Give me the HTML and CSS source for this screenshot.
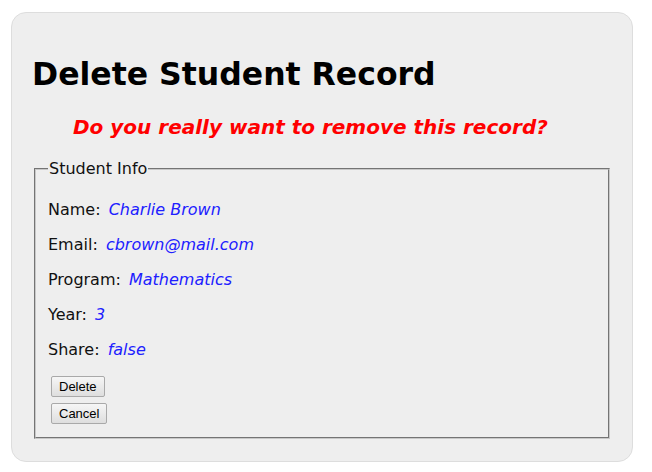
FILE: index.html
```html
<!DOCTYPE html>
<html>
<head>
<meta charset="utf-8">
<link rel="stylesheet" href="styles.css">
</head>
<body>
<div class="panel">
  <h1 class="title">Delete Student Record</h1>
  <p class="warning">Do you really want to remove this record?</p>
  <fieldset class="info">
    <legend class="info-legend">Student Info</legend>
    <p class="row">Name: <span class="value">Charlie Brown</span></p>
    <p class="row">Email: <span class="value">cbrown@mail.com</span></p>
    <p class="row">Program: <span class="value">Mathematics</span></p>
    <p class="row">Year: <span class="value">3</span></p>
    <p class="row">Share: <span class="value">false</span></p>
    <div class="actions">
      <button class="btn" type="button">Delete</button>
      <button class="btn" type="button">Cancel</button>
    </div>
  </fieldset>
</div>
</body>
</html>
```
FILE: styles.css
```css
html, body {
  margin: 0;
  padding: 0;
  background: #fff;
}
body {
  font-family: "DejaVu Sans", Verdana, sans-serif;
  font-size: 16px;
  color: #111;
}
.panel {
  margin: 12px 0 0 11px;
  width: 580px;
  height: 408px;
  padding: 20px;
  background: #eee;
  border: 1px solid #ddd;
  border-radius: 15px;
}
.title {
  font-size: 31.5px;
  font-weight: bold;
  margin: 23px 0 23px 0;
  color: #000;
}
.warning {
  margin: 0 0 20px 41px;
  color: #f00;
  font-size: 20px;
  font-weight: bold;
  font-style: italic;
}
.info {
  margin: 0 2px;
  padding: 6px 12px 13px;
  border: 2px groove #c8c8c8;
}
.info-legend {
  padding: 0 1px;
}
.row {
  margin: 16px 0;
}
.value {
  margin-left: 3px;
  color: #2020ff;
  font-style: italic;
}
.actions {
  display: flex;
  flex-direction: column;
  align-items: flex-start;
  gap: 6px;
  padding-left: 3px;
  padding-top: 1px;
}
.btn {
  font-family: "Liberation Sans", Arial, sans-serif;
  font-size: 13px;
  color: #000;
  padding: 1px 7px;
  margin: 0;
  height: 21px;
  background: linear-gradient(#f6f6f6, #dedede);
  border: 1px solid #a9a9a9;
  border-radius: 2px;
}
```
